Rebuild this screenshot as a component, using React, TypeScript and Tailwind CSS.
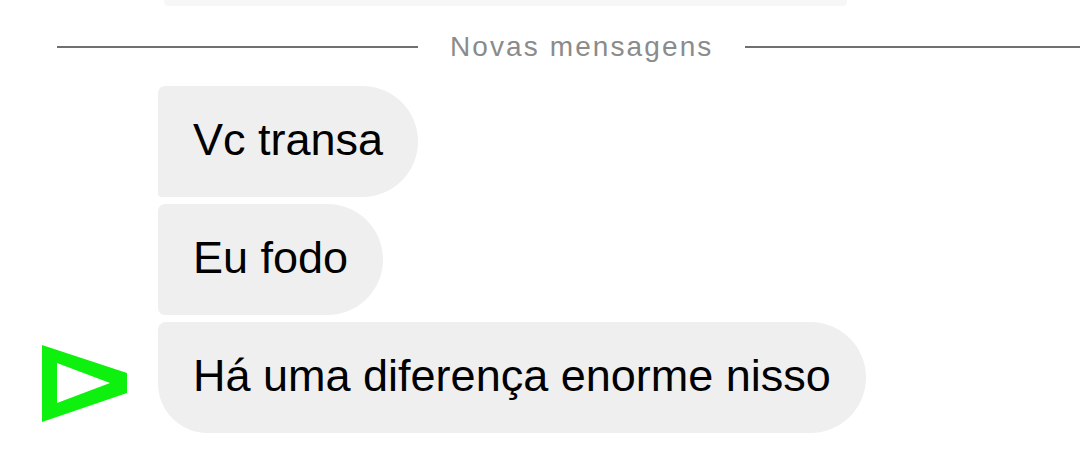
export default function App() {
  const font = { fontFamily: '"Liberation Sans", Arial, sans-serif' };

  return (
    <div className="relative w-[1080px] h-[454px] overflow-hidden bg-white" style={font}>
      {/* tail of the previous bubble, cut off at the top */}
      <div className="ml-[164px] w-[683px] h-[6px] bg-[#f7f7f7] rounded-b-[4px]" />

      <div className="mt-[21px] h-[40px] flex items-center pl-[57px]">
        <div className="w-[361px] h-[2px] bg-[#707070]" />
        <span className="mx-[32px] text-[28px] tracking-[2.1px] text-[#8b8b8b] leading-none whitespace-nowrap">
          Novas mensagens
        </span>
        <div className="flex-1 h-[2px] bg-[#707070]" />
      </div>

      <div className="mt-[19px] pl-[158px] flex flex-col items-start gap-[7px]">
        <div className="h-[111px] px-[35px] flex items-center bg-[#efefef] rounded-tl-[7px] rounded-bl-[4px] rounded-r-[56px]">
          <span className="text-[45px] text-black leading-none pb-[4px]">Vc transa</span>
        </div>
        <div className="h-[111px] px-[35px] flex items-center bg-[#efefef] rounded-l-[7px] rounded-r-[56px]">
          <span className="text-[45px] text-black leading-none pb-[4px]">Eu fodo</span>
        </div>
        <div className="h-[111px] px-[35px] flex items-center bg-[#efefef] rounded-tl-[8px] rounded-bl-[50px] rounded-r-[56px]">
          <span className="text-[45px] text-black leading-none pb-[4px]">Há uma diferença enorme nisso</span>
        </div>
      </div>

      {/* green marker pointing at the last message */}
      <svg className="absolute left-0 top-0" width="140" height="454" viewBox="0 0 140 454">
        <path
          fillRule="evenodd"
          fill="#0ef00e"
          d="M42 345 L127 373 L127 393 L42 422 Z M57 363 L110 383 L57 403 Z"
        />
      </svg>
    </div>
  );
}
